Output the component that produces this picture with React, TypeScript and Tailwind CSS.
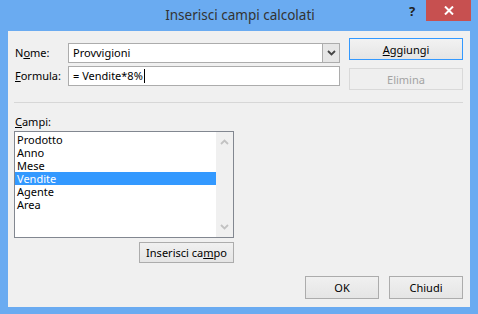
import React from "react";

const font = { fontFamily: '"Noto Sans", "Open Sans", sans-serif' };

function Btn({
  children,
  className = "",
  variant = "normal",
}: {
  children: React.ReactNode;
  className?: string;
  variant?: "normal" | "default" | "disabled";
}) {
  const cls =
    variant === "default"
      ? "border-[#3399ff] bg-gradient-to-b from-[#f2f2f2] to-[#e5e5e5] text-[#000]"
      : variant === "disabled"
      ? "border-[#d9d9d9] bg-[#efefef] text-[#a3a3a3]"
      : "border-[#acacac] bg-gradient-to-b from-[#f0f0f0] to-[#e5e5e5] text-[#000]";
  return (
    <div
      className={`flex items-center justify-center border text-[11px] leading-none ${cls} ${className}`}
    >
      {children}
    </div>
  );
}

export default function App() {
  const items = ["Prodotto", "Anno", "Mese", "Vendite", "Agente", "Area"];
  return (
    <div
      className="w-[478px] h-[314px] bg-[#6aabf1] flex flex-col overflow-hidden"
      style={font}
    >
      {/* Title bar */}
      <div className="relative h-[31px] flex items-center justify-center">
        <span className="text-[13.5px] text-[#333] -mt-[1px] ml-[2px]">Inserisci campi calcolati</span>
        <span className="absolute left-[409px] top-[2px] text-[13px] font-bold text-[#222]">?</span>
        <div className="absolute left-[426px] top-0 w-[45px] h-[21px] bg-[#c75050] flex items-center justify-center">
          <svg width="10" height="9" viewBox="0 0 10 9">
            <path d="M1 0.5 L9 8.5 M9 0.5 L1 8.5" stroke="#fff" strokeWidth="2" />
          </svg>
        </div>
      </div>
      {/* Content */}
      <div className="ml-[8px] w-[462px] h-[276px] bg-[#f0f0f0] flex flex-col text-[11px] text-black">
        <div className="h-[71px] flex">
          <div className="ml-[7px] mt-[12px] flex flex-col gap-[3px]">
            <div className="flex h-[20px] items-center">
              <span className="w-[53px]">
                N<u>o</u>me:
              </span>
              <div className="w-[272px] h-[20px] border border-[#acacac] bg-white flex items-center">
                <span className="pl-[4px] flex-1">Provvigioni</span>
                <div className="w-[17px] h-[18px] bg-[#e6e6e6] border-l border-[#acacac] flex items-center justify-center">
                  <svg width="9" height="6" viewBox="0 0 9 6">
                    <path d="M1 1 L4.5 4.5 L8 1" stroke="#444" strokeWidth="1.8" fill="none" />
                  </svg>
                </div>
              </div>
            </div>
            <div className="flex h-[20px] items-center">
              <span className="w-[53px]">
                <u>F</u>ormula:
              </span>
              <div className="w-[272px] h-[20px] border border-[#acacac] bg-white flex items-center">
                <span className="pl-[4px]">= Vendite*8%</span>
                <span className="w-px h-[14px] bg-black ml-px" />
              </div>
            </div>
          </div>
          <div className="ml-[9px] mt-[7px] flex flex-col gap-[8px]">
            <Btn variant="default" className="w-[114px] h-[22px]">
              <span>
                <u>A</u>ggiungi
              </span>
            </Btn>
            <Btn variant="disabled" className="w-[114px] h-[22px]">
              Elimina
            </Btn>
          </div>
        </div>
        <div className="ml-[6px] w-[449px] h-px bg-[#d7d7d7]" />
        <div className="ml-[7px] mt-[11px] h-[16px] leading-[16px]">
          <u>C</u>ampi:
        </div>
        <div className="ml-[6px] mt-[1px] w-[220px] h-[107px] border border-[#828790] bg-white flex">
          <div className="w-[201px] pt-[1px] flex flex-col">
            {items.map((it) => (
              <div
                key={it}
                className={`h-[13px] leading-[13px] pl-[2px] ${
                  it === "Vendite" ? "bg-[#3399ff] text-white" : ""
                }`}
              >
                {it}
              </div>
            ))}
          </div>
          <div className="w-[17px] bg-[#f0f0f0] flex flex-col items-center justify-between py-[7px]">
            <svg width="9" height="6" viewBox="0 0 9 6">
              <path d="M1 5 L4.5 1.5 L8 5" stroke="#c2c2c2" strokeWidth="1.8" fill="none" />
            </svg>
            <svg width="9" height="6" viewBox="0 0 9 6">
              <path d="M1 1 L4.5 4.5 L8 1" stroke="#c2c2c2" strokeWidth="1.8" fill="none" />
            </svg>
          </div>
        </div>
        <div className="ml-[131px] mt-[4px]">
          <Btn className="w-[95px] h-[21px]">
            <span>
              Inserisci ca<u>m</u>po
            </span>
          </Btn>
        </div>
        <div className="ml-[297px] mt-[13px] flex gap-[10px]">
          <Btn className="w-[74px] h-[23px]">OK</Btn>
          <Btn className="w-[74px] h-[23px]">Chiudi</Btn>
        </div>
      </div>
    </div>
  );
}
